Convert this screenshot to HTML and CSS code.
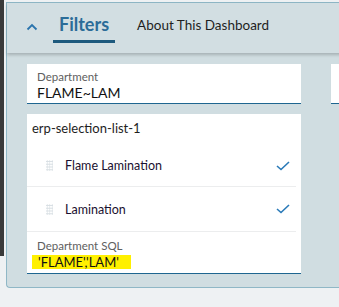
FILE: index.html
```html
<html lang="en">

<head>
    <meta charset="UTF-8">
    <meta name="viewport" content="width=device-width, initial-scale=1.0">
    <title>Filters</title>
    <link rel="stylesheet" href="styles.css">
</head>

<body>
    <div class="edge"></div>
    <div class="main">
        <section class="panel">
            <header class="panel-header">
                <button class="collapse">
                    <svg width="12" height="8" viewBox="0 0 12 8">
                        <path d="M1.5 6.5 L6 2 L10.5 6.5" fill="none" stroke="#2a74ad" stroke-width="1.8" />
                    </svg>
                </button>
                <span class="tab tab--active">Filters</span>
                <span class="tab">About This Dashboard</span>
            </header>

            <div class="panel-body">
                <div class="fields">
                    <div class="field">
                        <span class="field__label">Department</span>
                        <span class="field__value">FLAME~LAM</span>
                    </div>
                    <div class="field field--side"></div>
                </div>

                <div class="card">
                    <div class="card__title">erp-selection-list-1</div>
                    <ul class="list">
                        <li class="list-item">
                            <span class="handle"></span>
                            <span class="list-item__text">Flame Lamination</span>
                            <svg class="check" width="14" height="10" viewBox="0 0 14 10">
                                <path d="M1 5 L5 8.5 L13 1" fill="none" stroke="#2a7ab8" stroke-width="1.6" />
                            </svg>
                        </li>
                        <li class="list-item">
                            <span class="handle"></span>
                            <span class="list-item__text">Lamination</span>
                            <svg class="check" width="14" height="10" viewBox="0 0 14 10">
                                <path d="M1 5 L5 8.5 L13 1" fill="none" stroke="#2a7ab8" stroke-width="1.6" />
                            </svg>
                        </li>
                    </ul>
                    <div class="sql">
                        <span class="field__label">Department SQL</span>
                        <span class="sql__value">'FLAME','LAM'</span>
                    </div>
                </div>
            </div>
        </section>
    </div>
</body>

</html>
```

FILE: styles.css
```css
body {
    margin: 0;
    background-color: #eef1f3;
    font-family: 'Lato', 'Noto Sans', sans-serif;
    color: #1e1e1e;
    display: flex;
    align-items: flex-start;
    height: 307px;
    overflow: hidden;
}

.edge {
    width: 4px;
    height: 256px;
    background-color: #3a3a3a;
    flex: none;
}

.main {
    flex: 1;
    padding: 2px 0 0 2px;
}

.panel {
    background-color: #d0dde1;
    border: 1px solid #8fb7c6;
    border-right: none;
    border-bottom-left-radius: 4px;
    height: 286px;
    box-sizing: border-box;
}

.panel-header {
    height: 50px;
    display: flex;
    align-items: flex-start;
    background-color: #d2dee2;
    box-shadow: 0 2px 3px rgba(0, 0, 0, 0.2);
    position: relative;
}

.collapse {
    border: none;
    background: none;
    padding: 0;
    width: 12px;
    height: 8px;
    margin: 20px 0 0 19px;
    display: flex;
}

.tab {
    font-size: 13.5px;
    color: #1e1e1e;
    padding: 6px 6px 0;
    height: 40px;
    line-height: 32px;
    box-sizing: border-box;
}

.tab--active {
    font-size: 18px;
    font-weight: bold;
    color: #2b6c98;
    border-bottom: 3px solid #1d5a7e;
    padding-top: 5px;
    margin-left: 15px;
    margin-right: 16px;
}

.panel-body {
    padding: 11px 0 0 20px;
}

.fields {
    display: flex;
    gap: 30px;
}

.field {
    background-color: #fff;
    width: 274px;
    height: 40px;
    box-sizing: border-box;
    border-bottom: 1px solid #1f6690;
    padding: 5px 10px 0;
    display: flex;
    flex-direction: column;
    flex: none;
}

.field--side {
    width: 20px;
}

.field__label {
    font-size: 11.5px;
    color: #606060;
    line-height: 15px;
}

.field__value {
    font-size: 14px;
    line-height: 18px;
    color: #111;
}

.card {
    margin-top: 10px;
    width: 274px;
    background-color: #fff;
    border-bottom: 1px solid #1f6690;
}

.card__title {
    font-size: 13px;
    padding: 6px 5px 0;
    height: 27px;
    box-sizing: border-box;
}

.list {
    list-style: none;
    margin: 0;
    padding: 0;
    margin-right: 5px;
}

.list-item {
    height: 45px;
    display: flex;
    align-items: center;
    border-bottom: 1px solid #ecedee;
    box-sizing: border-box;
    padding: 0 6px 0 19px;
}

.list-item:first-child {
    height: 46px;
    padding-top: 4px;
}

.handle {
    width: 7px;
    height: 11px;
    background-image: radial-gradient(circle, #d6dde2 0.9px, transparent 1px);
    background-size: 2.5px 2.8px;
    flex: none;
}

.list-item__text {
    font-size: 12.5px;
    color: #1a1030;
    margin-left: 12px;
    flex: 1;
}

.check {
    flex: none;
}

.sql {
    display: flex;
    flex-direction: column;
    align-items: flex-start;
    padding: 6px 10px 3px;
    height: 41px;
    box-sizing: border-box;
}

.sql__value {
    font-size: 13px;
    line-height: 14px;
    color: #111;
    background-color: #fff000;
    padding: 0 12px 0 6px;
    margin-left: -5px;
    margin-top: 2px;
}
```
